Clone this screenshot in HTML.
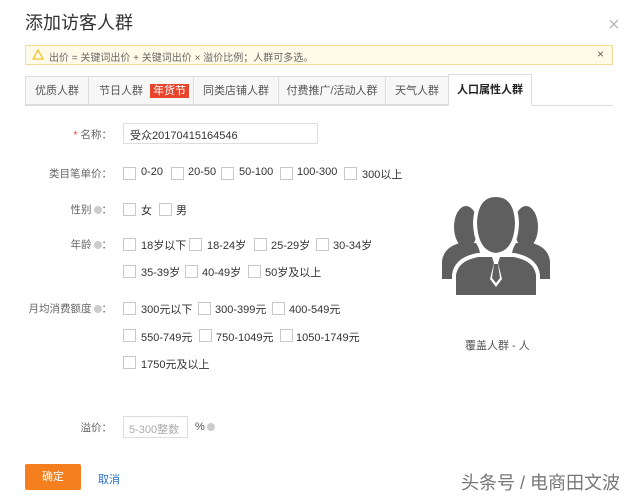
<!DOCTYPE html>
<html><head><meta charset="utf-8"><style>
body{margin:0;width:640px;height:498px;background:#fff;font-family:"Liberation Sans","Noto Sans CJK SC",sans-serif;color:#333;position:relative;overflow:hidden;font-size:11px}
.a{position:absolute;white-space:nowrap}
.cb{position:absolute;width:11px;height:11px;border:1px solid #c8c8c8;background:#fff}
.lbl{position:absolute;right:528px;white-space:nowrap;color:#666;font-size:10.5px}
.tab{position:absolute;top:76px;height:29px;line-height:29px;border:1px solid #ddd;background:#f7f7f7;text-align:center;font-size:11px;color:#555;box-sizing:border-box}
.q{display:inline-block;width:8px;height:8px;border-radius:50%;background:#ccc;vertical-align:-1px;margin-left:2px}
</style></head><body>
<div class="a" style="left:25px;top:9px;font-size:18px;color:#333">添加访客人群</div>
<div class="a" style="left:608px;top:14px;font-size:20px;color:#bbb">×</div>
<div class="a" style="left:25px;top:45px;width:588px;height:20px;background:#fffbe8;border:1px solid #f1dc9a;box-sizing:border-box"></div>
<svg class="a" style="left:32px;top:49px" width="12" height="12" viewBox="0 0 12 12"><path d="M6 1 L11 10 L1 10 Z" fill="none" stroke="#f0b400" stroke-width="1"/></svg>
<div class="a" style="left:49px;top:49px;color:#666;font-size:10px">出价 = 关键词出价 + 关键词出价 × 溢价比例；人群可多选。</div>
<div class="a" style="left:597px;top:47px;color:#666;font-size:12px">×</div>
<div style="position:absolute;left:25px;top:105px;width:588px;border-top:1px solid #ddd"></div>
<div class="tab" style="left:25px;width:64px">优质人群</div>
<div class="tab" style="left:88px;width:106px;text-align:left;padding-left:10px">节日人群 <span style="background:#e8452c;color:#fff;padding:1px 3px;margin-left:4px">年货节</span></div>
<div class="tab" style="left:193px;width:86px">同类店铺人群</div>
<div class="tab" style="left:278px;width:108px">付费推广/活动人群</div>
<div class="tab" style="left:385px;width:64px">天气人群</div>
<div class="tab" style="left:448px;width:84px;background:#fff;border-bottom-color:#fff;color:#222;font-weight:bold;top:74px;height:32px;line-height:31px">人口属性人群</div>

<div class="lbl" style="top:127px"><span style="color:#e44">*</span> 名称：</div>
<div class="a" style="left:123px;top:123px;width:195px;height:21px;border:1px solid #ddd;box-sizing:border-box;padding:3px 6px;color:#333">受众20170415164546</div>

<div class="lbl" style="top:166px">类目笔单价：</div>
<div class="cb" style="left:123px;top:167px"></div><div class="a" style="left:141px;top:166px">0-20</div>
<div class="cb" style="left:171px;top:167px"></div><div class="a" style="left:188px;top:166px">20-50</div>
<div class="cb" style="left:221px;top:167px"></div><div class="a" style="left:239px;top:166px">50-100</div>
<div class="cb" style="left:280px;top:167px"></div><div class="a" style="left:297px;top:166px">100-300</div>
<div class="cb" style="left:344px;top:167px"></div><div class="a" style="left:362px;top:166px">300以上</div>

<div class="lbl" style="top:202px">性别<span class="q"></span>：</div>
<div class="cb" style="left:123px;top:203px"></div><div class="a" style="left:141px;top:202px">女</div>
<div class="cb" style="left:159px;top:203px"></div><div class="a" style="left:176px;top:202px">男</div>

<div class="lbl" style="top:237px">年龄<span class="q"></span>：</div>
<div class="cb" style="left:123px;top:238px"></div><div class="a" style="left:141px;top:237px">18岁以下</div>
<div class="cb" style="left:189px;top:238px"></div><div class="a" style="left:207px;top:237px">18-24岁</div>
<div class="cb" style="left:254px;top:238px"></div><div class="a" style="left:271px;top:237px">25-29岁</div>
<div class="cb" style="left:316px;top:238px"></div><div class="a" style="left:333px;top:237px">30-34岁</div>
<div class="cb" style="left:123px;top:265px"></div><div class="a" style="left:141px;top:264px">35-39岁</div>
<div class="cb" style="left:185px;top:265px"></div><div class="a" style="left:202px;top:264px">40-49岁</div>
<div class="cb" style="left:248px;top:265px"></div><div class="a" style="left:265px;top:264px">50岁及以上</div>

<div class="lbl" style="top:301px">月均消费额度<span class="q"></span>：</div>
<div class="cb" style="left:123px;top:302px"></div><div class="a" style="left:141px;top:301px">300元以下</div>
<div class="cb" style="left:198px;top:302px"></div><div class="a" style="left:215px;top:301px">300-399元</div>
<div class="cb" style="left:272px;top:302px"></div><div class="a" style="left:289px;top:301px">400-549元</div>
<div class="cb" style="left:123px;top:329px"></div><div class="a" style="left:141px;top:329px">550-749元</div>
<div class="cb" style="left:199px;top:329px"></div><div class="a" style="left:216px;top:329px">750-1049元</div>
<div class="cb" style="left:280px;top:329px"></div><div class="a" style="left:296px;top:329px">1050-1749元</div>
<div class="cb" style="left:123px;top:356px"></div><div class="a" style="left:141px;top:356px">1750元及以上</div>

<div class="lbl" style="top:420px">溢价：</div>
<div class="a" style="left:123px;top:416px;width:65px;height:22px;border:1px solid #ddd;box-sizing:border-box;padding:4px 5px;color:#aaa">5-300整数</div>
<div class="a" style="left:195px;top:421px;color:#555">%<span class="q"></span></div>

<svg class="a" style="left:440px;top:193px" width="112" height="104" viewBox="0 0 112 104">
<g fill="#5f5f5f">
<ellipse cx="26" cy="34" rx="12" ry="21"/>
<path d="M2 86 L2 68 Q4 54 20 50 L36 50 Q40 56 40 62 L40 86 Z"/>
<ellipse cx="86" cy="34" rx="12" ry="21"/>
<path d="M110 86 L110 68 Q108 54 92 50 L76 50 Q72 56 72 62 L72 86 Z"/>
</g>
<g stroke="#fff" stroke-width="4" fill="#5f5f5f">
<path d="M56 2 Q76 2 77 30 Q76 60 56 62 Q36 60 35 30 Q36 2 56 2 Z"/>
<path d="M14 104 L14 82 Q16 66 38 62 L74 62 Q96 66 98 82 L98 104 Z"/>
</g>
<path d="M52 64 L60 64 L58 70 L62 86 L56 94 L50 86 L54 70 Z" fill="#fff"/>
<path d="M54 71 L58 71 L60 85 L56 90 L52 85 Z" fill="#5f5f5f"/>
</svg>
<div class="a" style="left:465px;top:337px;color:#555">覆盖人群 - 人</div>

<div class="a" style="left:25px;top:464px;width:56px;height:26px;background:#f57e1f;border-radius:2px;color:#fff;text-align:center;line-height:26px">确定</div>
<div class="a" style="left:98px;top:471px;color:#2a6fc9">取消</div>
<div class="a" style="left:461px;top:469px;font-size:18px;color:#777">头条号 / 电商田文波</div>
</body></html>
